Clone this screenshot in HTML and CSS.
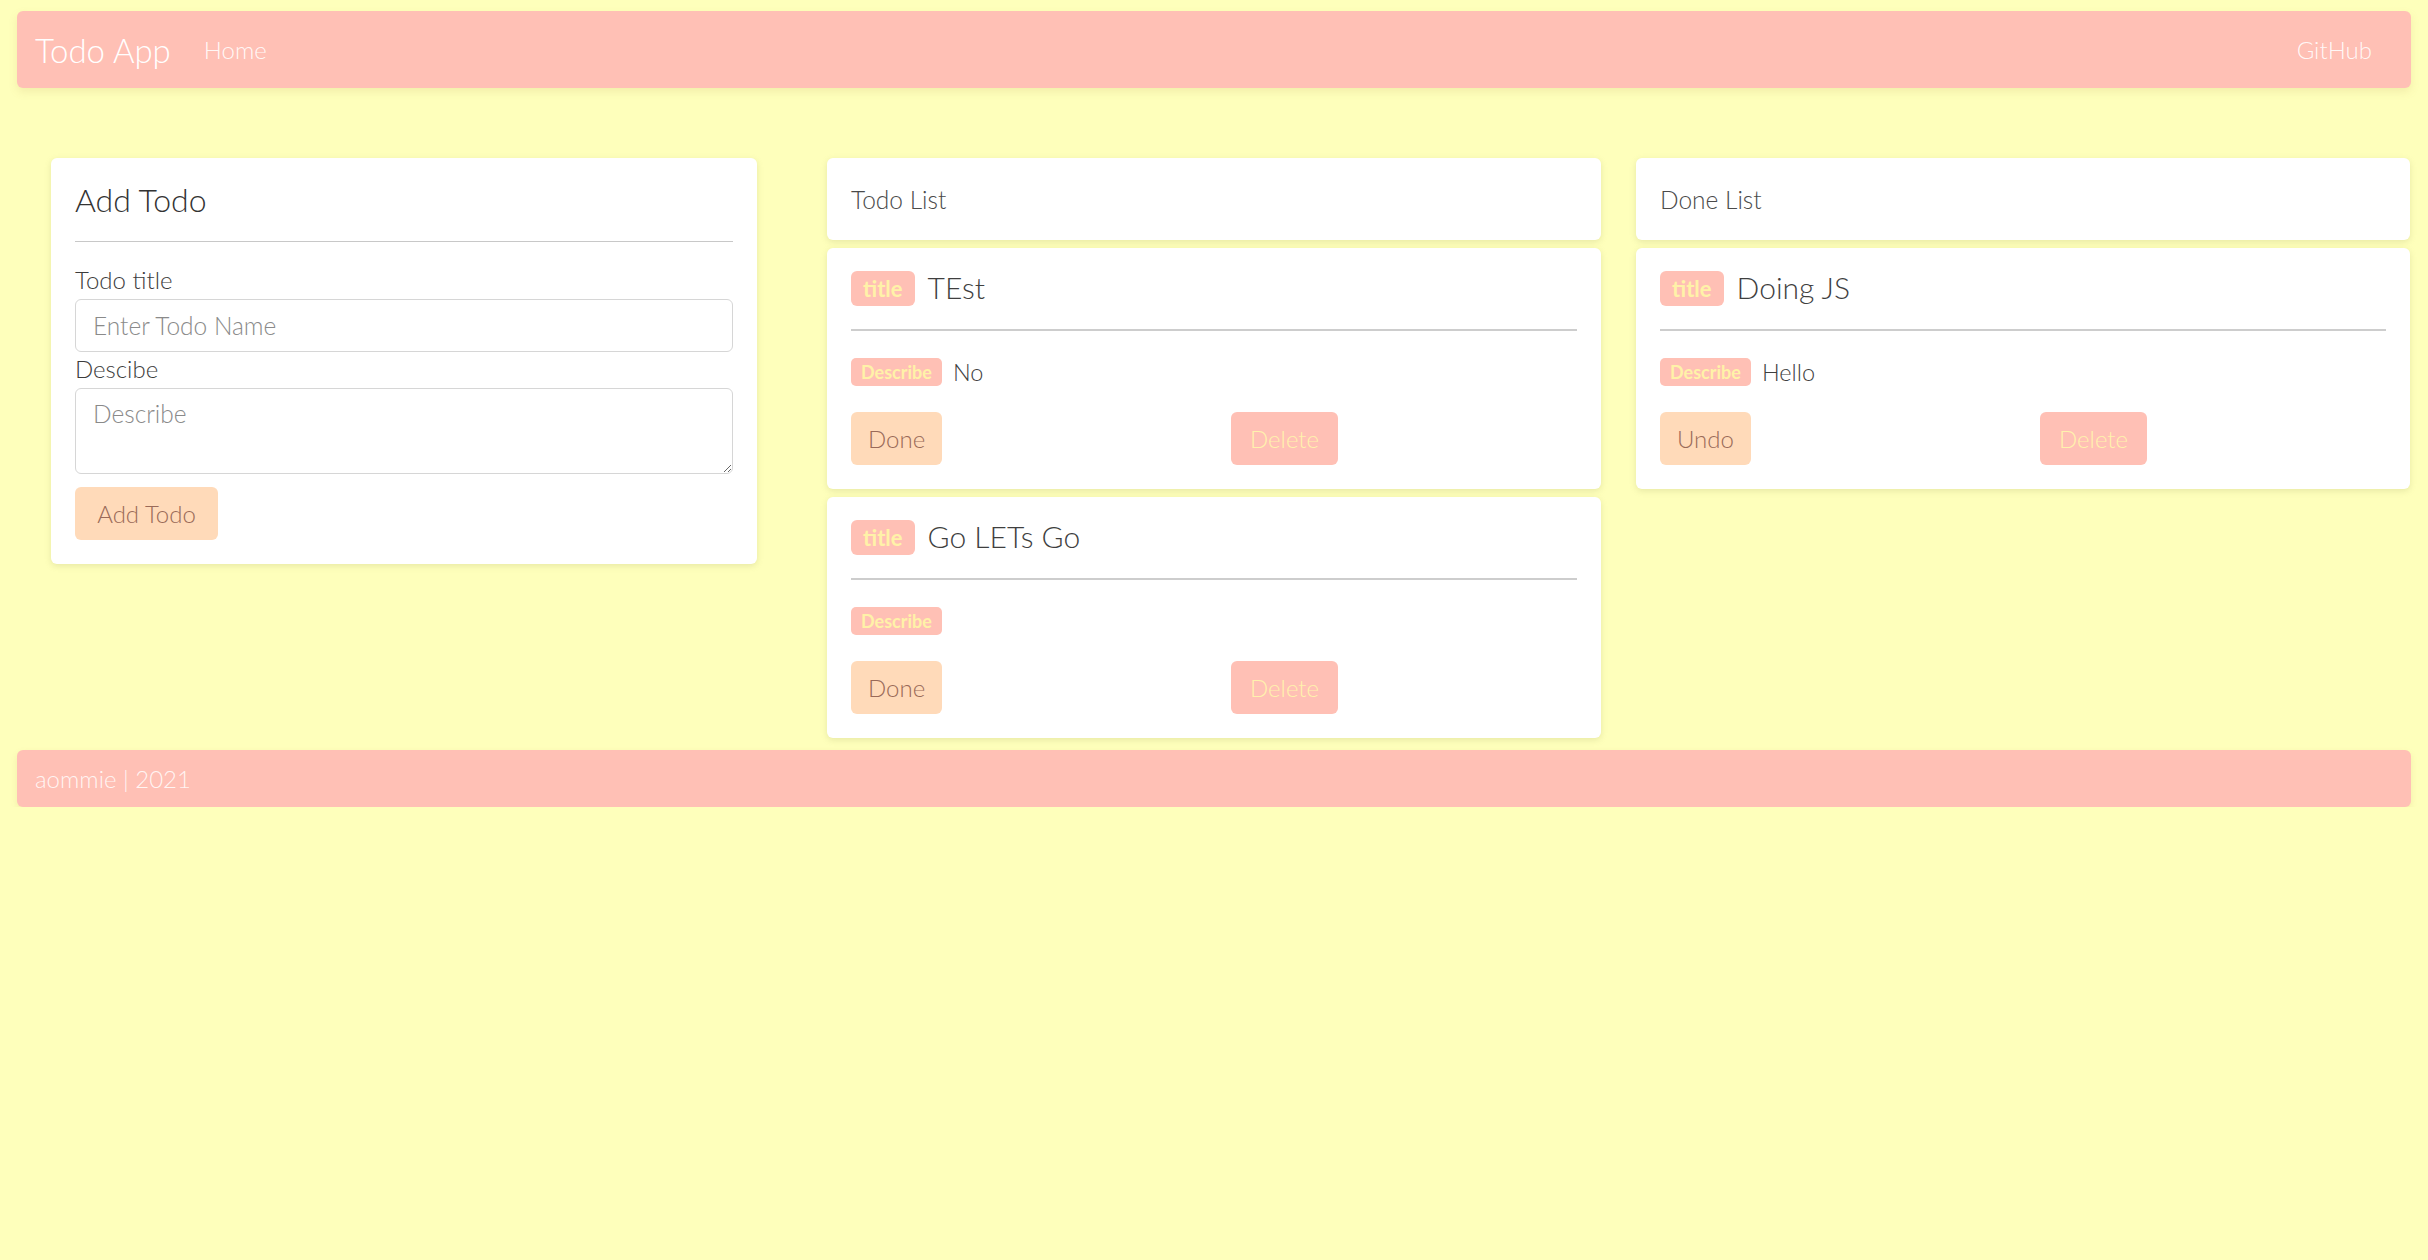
FILE: index.html
```html
<!DOCTYPE html>
<html lang="en">
<head>
<meta charset="utf-8">
<title>Todo App</title>
<link rel="stylesheet" href="styles.css">
</head>
<body>
<nav class="navbar">
  <a class="brand">Todo App</a>
  <a class="nav-link">Home</a>
  <a class="nav-link nav-right">GitHub</a>
</nav>

<main class="board">
  <section class="col col-add">
    <div class="card add-card">
      <h3 class="add-title">Add Todo</h3>
      <hr class="add-rule">
      <label class="field-label">Todo title</label>
      <input class="field-input" type="text" placeholder="Enter Todo Name">
      <label class="field-label">Descibe</label>
      <textarea class="field-area" placeholder="Describe"></textarea>
      <button class="btn btn-peach">Add Todo</button>
    </div>
  </section>

  <section class="col col-list">
    <div class="card list-head">Todo List</div>
    <div class="card item">
      <div class="item-title"><span class="badge badge-title">title</span><span class="item-name">TEst</span></div>
      <hr class="item-rule">
      <div class="item-desc"><span class="badge badge-desc">Describe</span><span class="item-text">No</span></div>
      <div class="item-actions">
        <div><button class="btn btn-peach">Done</button></div>
        <div><button class="btn btn-pink">Delete</button></div>
      </div>
    </div>
    <div class="card item">
      <div class="item-title"><span class="badge badge-title">title</span><span class="item-name">Go LETs Go</span></div>
      <hr class="item-rule">
      <div class="item-desc"><span class="badge badge-desc">Describe</span><span class="item-text"></span></div>
      <div class="item-actions">
        <div><button class="btn btn-peach">Done</button></div>
        <div><button class="btn btn-pink">Delete</button></div>
      </div>
    </div>
  </section>

  <section class="col col-list">
    <div class="card list-head">Done List</div>
    <div class="card item">
      <div class="item-title"><span class="badge badge-title">title</span><span class="item-name">Doing JS</span></div>
      <hr class="item-rule">
      <div class="item-desc"><span class="badge badge-desc">Describe</span><span class="item-text">Hello</span></div>
      <div class="item-actions">
        <div><button class="btn btn-peach">Undo</button></div>
        <div><button class="btn btn-pink">Delete</button></div>
      </div>
    </div>
  </section>
</main>

<footer class="footer">aommie | 2021</footer>
</body>
</html>
```
FILE: styles.css
```css
* { box-sizing: border-box; }

body {
  margin: 0;
  background: #feffbb;
  font-family: Lato, "Open Sans", sans-serif;
  font-weight: 300;
  color: #444;
}

.navbar {
  margin: 11px 17px 0 17px;
  height: 77px;
  background: #ffc0b5;
  border-radius: 6px;
  box-shadow: 0 4px 8px rgba(180, 140, 80, 0.15);
  display: flex;
  align-items: center;
  padding: 0 39px 0 18px;
}

.brand {
  font-size: 33px;
  color: #fff;
  margin-right: 33px;
}

.nav-link {
  font-size: 24px;
  color: rgba(255, 255, 255, 0.9);
}

.nav-right { margin-left: auto; }

.board {
  display: flex;
  align-items: flex-start;
  margin-top: 70px;
  padding-left: 51px;
}

.col {
  display: flex;
  flex-direction: column;
  gap: 8px;
}

.col-add { width: 706px; margin-right: 70px; }
.col-list { width: 774px; }
.col-list + .col-list { margin-left: 35px; }

.card {
  background: #fff;
  border-radius: 6px;
  box-shadow: 0 2px 6px rgba(150, 150, 90, 0.22);
}

.add-card {
  padding: 24px;
  display: flex;
  flex-direction: column;
  align-items: flex-start;
}

.add-title {
  margin: -2px 0 0 0;
  font-size: 32px;
  font-weight: 300;
  line-height: 40px;
  color: #333;
}

.add-rule {
  align-self: stretch;
  border: 0;
  border-top: 1.5px solid #c8c8c8;
  margin: 21px 0 22px 0;
}

.field-label {
  font-size: 24px;
  line-height: 32px;
  color: #3c3c3c;
  margin-bottom: 3px;
}

.field-input,
.field-area {
  align-self: stretch;
  border: 1.5px solid #d6d6d6;
  border-radius: 6px;
  font-family: inherit;
  font-weight: 300;
  font-size: 24.5px;
  color: #444;
  padding: 0 17px;
  background: #fff;
}

.field-input { height: 53px; margin-bottom: 1px; }

.field-area {
  height: 86px;
  padding-top: 10px;
  resize: vertical;
}

.field-input::placeholder,
.field-area::placeholder { color: #8a8a8a; }

.btn {
  border: 0;
  border-radius: 6px;
  height: 53px;
  padding: 0 18px;
  font-family: inherit;
  font-weight: 300;
  font-size: 24px;
}

.add-card .btn { margin-top: 13px; width: 143px; }

.btn-peach { background: #ffdab9; color: #9a6a58; }
.btn-pink { background: #ffc0b5; color: #fff2ad; }

.list-head {
  height: 82px;
  padding: 0 24px;
  display: flex;
  align-items: center;
  font-size: 24.5px;
  color: #4a4a4a;
}

.item {
  padding: 24px;
  height: 241px;
}

.item-title {
  display: flex;
  align-items: center;
  height: 40px;
  margin-top: -4px;
}

.badge {
  border-radius: 6px;
  background: #ffc0b5;
  color: #fff2a8;
  font-weight: 700;
}

.badge-title {
  height: 35px;
  line-height: 35px;
  font-size: 22px;
  padding: 0 12px;
  margin-right: 13px;
}

.item-name {
  font-size: 30px;
  color: #3f3f3f;
  margin-top: -3px;
}

.item-rule {
  border: 0;
  border-top: 2px solid #cdcdcd;
  margin: 21px 0 27px 0;
}

.item-desc {
  display: flex;
  align-items: center;
  height: 28px;
}

.badge-desc {
  height: 28px;
  line-height: 28px;
  font-size: 18px;
  padding: 0 10px;
  margin-right: 11px;
  border-radius: 5px;
}

.item-text {
  font-size: 23.5px;
  color: #3f3f3f;
}

.item-actions {
  display: grid;
  grid-template-columns: 1fr 1fr;
  column-gap: 34px;
  margin-top: 26px;
}

.item-actions .btn { padding: 0 17px; }
.item-actions .btn-pink { padding: 0 19px; }

.footer {
  margin: 12px 17px 0 17px;
  height: 57px;
  background: #ffc0b5;
  border-radius: 6px;
  box-shadow: 0 3px 6px rgba(180, 140, 80, 0.15);
  padding-left: 18px;
  display: flex;
  align-items: center;
  font-size: 24px;
  color: rgba(255, 255, 255, 0.85);
}
```
